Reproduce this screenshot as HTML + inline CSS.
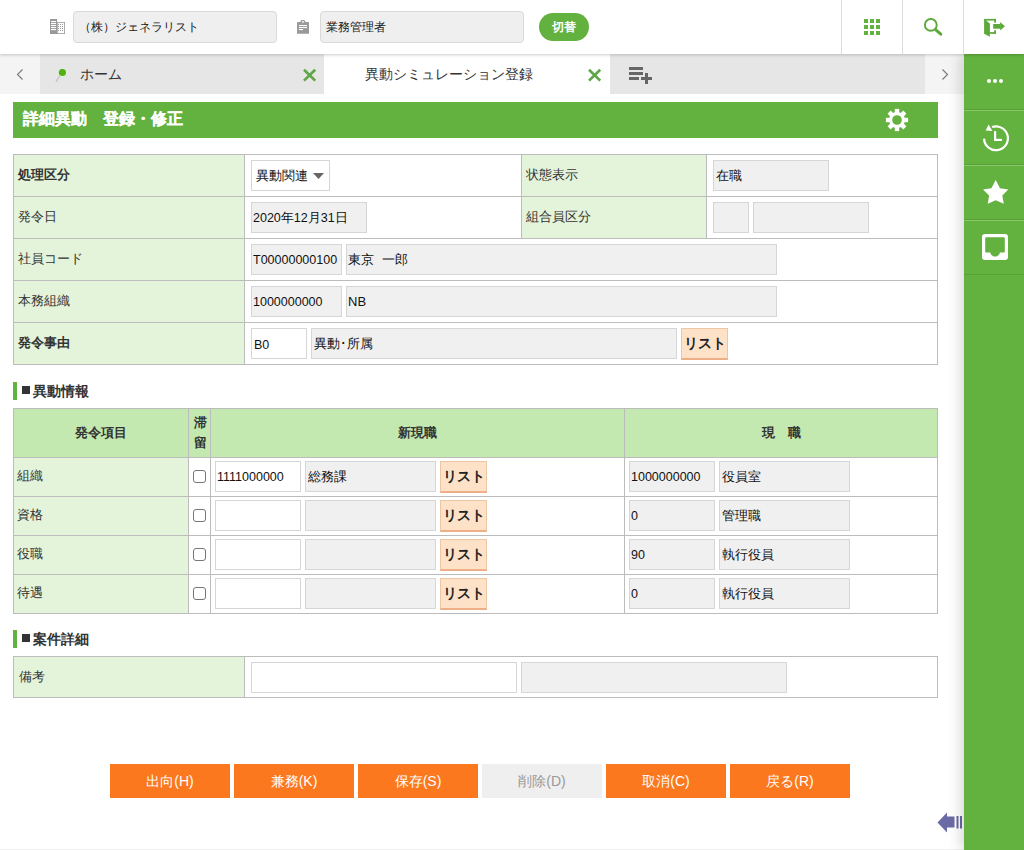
<!DOCTYPE html>
<html lang="ja">
<head>
<meta charset="utf-8">
<style>
*{box-sizing:border-box;margin:0;padding:0}
html,body{width:1024px;height:850px;overflow:hidden;background:#fff;font-family:"Liberation Sans",sans-serif;color:#333;font-size:13px}
.abs{position:absolute}
#hdr{position:absolute;left:0;top:0;width:1024px;height:54px;background:#fff;box-shadow:0 1px 3px rgba(0,0,0,.2);z-index:6}
.hbox{position:absolute;top:11px;height:32px;border:1px solid #d9d9d9;border-radius:4px;background:#efefef;font-size:12px;line-height:30px;padding-left:5px;color:#222}
.vdiv{position:absolute;top:0;width:1px;height:54px;background:#dcdcdc}
#tabs{position:absolute;left:0;top:54px;width:964px;height:40px;background:#e6e6e6}
.tab{position:absolute;top:0;height:40px;line-height:40px;font-size:14px;color:#333}
#side{position:absolute;left:964px;top:54px;width:60px;height:796px;background:#63b13f;box-shadow:-4px 0 12px rgba(0,0,0,.15);z-index:4}
.sdiv{position:absolute;left:0;width:60px;height:2px;border-top:1px solid #58a036;background:#86c868}
#title{position:absolute;left:13px;top:102px;width:925px;height:36px;background:#63b13f;color:#fff;font-weight:bold;font-size:16px;line-height:33px;padding-left:10px;-webkit-text-stroke:0.2px #fff}
.hl{position:absolute;background:#bcbcbc;height:1px}
.vl{position:absolute;background:#bcbcbc;width:1px}
.lab{position:absolute;background:#e3f4da}
.txt{position:absolute;white-space:nowrap;font-size:13px;color:#333}
.inp{position:absolute;border:1px solid #d6d6d6;background:#f0f0f0;font-size:13px;color:#111;padding-left:2px;white-space:nowrap;overflow:hidden}
.inw{background:#fff}
.lst{position:absolute;background:#fde2c8;border:1px solid #efc6a4;border-bottom:2px solid #eeae86;font-weight:bold;font-size:14px;color:#222;text-align:center}
.sec{position:absolute;left:13px;height:18px;border-left:4px solid #63b13f;font-weight:bold;font-size:14px;line-height:18px;padding-left:16px;color:#333}
.sec:before{content:"";position:absolute;left:5px;top:4px;width:8px;height:8px;background:#333}
.btn{position:absolute;top:764px;width:120px;height:34px;background:#fb781e;color:#fff;font-size:14px;line-height:34px;text-align:center}
.chk{position:absolute;width:13px;height:13px;border:1px solid #767676;border-radius:3px;background:#fff}
</style>
</head>
<body>
<!-- header -->
<div id="hdr">
  <!-- building icon -->
  <svg class="abs" style="left:50px;top:19px" width="15" height="15" viewBox="0 0 15 15">
    <rect x="0" y="0" width="7" height="15" fill="#999"/>
    <g fill="#fff"><rect x="1" y="2" width="5" height="1.1"/><rect x="1" y="4" width="5" height="1.1"/><rect x="1" y="6" width="5" height="1.1"/><rect x="1" y="8" width="5" height="1.1"/><rect x="1" y="10" width="5" height="1.1"/></g>
    <rect x="7" y="3" width="8" height="12" fill="#999"/>
    <rect x="7.7" y="3.8" width="6.5" height="10.4" fill="#fff"/>
    <g fill="#999"><rect x="8" y="5" width="1" height="1"/><rect x="10" y="5" width="1" height="1"/><rect x="12" y="5" width="1" height="1"/><rect x="8" y="7" width="1" height="1"/><rect x="10" y="7" width="1" height="1"/><rect x="12" y="7" width="1" height="1"/><rect x="8" y="9" width="1" height="1"/><rect x="10" y="9" width="1" height="1"/><rect x="12" y="9" width="1" height="1"/><rect x="8" y="11" width="1" height="1"/><rect x="10" y="11" width="1" height="1"/><rect x="12" y="11" width="1" height="1"/></g>
  </svg>
  <div class="hbox" style="left:73px;width:204px">（株）ジェネラリスト</div>
  <!-- clipboard icon -->
  <svg class="abs" style="left:297px;top:20px" width="12" height="14" viewBox="0 0 12 14">
    <rect x="0" y="1.9" width="12" height="11.9" rx="0.6" fill="#999"/>
    <rect x="3.4" y="0" width="4.9" height="3.4" rx="1.6" fill="#999"/>
    <rect x="5" y="1.2" width="1.8" height="1.4" fill="#fff"/>
    <g fill="#fff"><rect x="1.9" y="5" width="8.1" height="1.1"/><rect x="1.9" y="7" width="8.1" height="1.1"/><rect x="1.9" y="9" width="4.1" height="1.1"/></g>
  </svg>
  <div class="hbox" style="left:320px;width:204px;padding-left:5px">業務管理者</div>
  <div class="abs" style="left:539px;top:13px;width:50px;height:28px;border-radius:14px;background:#63b13f;color:#fff;font-size:12px;line-height:28px;text-align:center;font-weight:bold">切替</div>
  <div class="vdiv" style="left:841px"></div>
  <div class="vdiv" style="left:902px"></div>
  <div class="vdiv" style="left:963px"></div>
  <!-- grid icon -->
  <svg class="abs" style="left:864px;top:19px" width="16" height="16" viewBox="0 0 16 16" fill="#63b13f">
    <rect x="0" y="0" width="4" height="4"/><rect x="6" y="0" width="4" height="4"/><rect x="12" y="0" width="4" height="4"/>
    <rect x="0" y="6" width="4" height="4"/><rect x="6" y="6" width="4" height="4"/><rect x="12" y="6" width="4" height="4"/>
    <rect x="0" y="12" width="4" height="4"/><rect x="6" y="12" width="4" height="4"/><rect x="12" y="12" width="4" height="4"/>
  </svg>
  <!-- search icon -->
  <svg class="abs" style="left:923px;top:18px" width="20" height="19" viewBox="0 0 20 19">
    <circle cx="7.8" cy="6.9" r="5.9" fill="none" stroke="#5aa93a" stroke-width="1.9"/>
    <path d="M12.8 11.8L17.8 16.2" stroke="#5aa93a" stroke-width="3" stroke-linecap="round"/>
  </svg>
  <!-- exit icon -->
  <svg class="abs" style="left:983px;top:18px" width="23" height="20" viewBox="0 0 23 20" fill="#5aa93a">
    <rect x="1.1" y="0.9" width="11.9" height="1.7"/>
    <rect x="11.2" y="0.9" width="1.8" height="3.8"/>
    <rect x="11.2" y="12.2" width="1.8" height="3.6"/>
    <rect x="6" y="14.1" width="7" height="1.7"/>
    <path d="M1.1 0.9L6.9 5.6V18.7L1.1 15.8Z"/>
    <rect x="10.2" y="6" width="7.4" height="4.7"/>
    <path d="M17.2 3.9L21.9 8.35L17.2 12.6Z"/>
  </svg>
</div>

<!-- tabs -->
<div id="tabs">
  <div class="abs" style="left:0;top:0;width:40px;height:40px;background:#f4f4f4"></div>
  <svg class="abs" style="left:16px;top:15px" width="8" height="11" viewBox="0 0 8 11"><path d="M6.5 0.5L1.5 5.5L6.5 10.5" fill="none" stroke="#777" stroke-width="1.1"/></svg>
  <!-- pin -->
  <svg class="abs" style="left:55px;top:15px" width="13" height="14" viewBox="0 0 13 14">
    <path d="M4.3 7.6L1.3 12.2" stroke="#c4c4c4" stroke-width="1.4" stroke-linecap="round"/>
    <circle cx="7.4" cy="3.5" r="4.2" fill="#dcf5cf"/>
    <circle cx="7.4" cy="3.5" r="3.6" fill="#55b015"/>
  </svg>
  <div class="tab" style="left:80px">ホーム</div>
  <svg class="abs" style="left:302px;top:14px" width="15" height="14" viewBox="0 0 15 14"><path d="M2 1.8L13.2 12.6M13.2 1.8L2 12.6" stroke="#5ea647" stroke-width="2.7"/></svg>
  <div class="abs" style="left:324px;top:0;width:286px;height:40px;background:#fff"></div>
  <div class="tab" style="left:365px">異動シミュレーション登録</div>
  <svg class="abs" style="left:587px;top:14px" width="15" height="14" viewBox="0 0 15 14"><path d="M2 1.8L13.2 12.6M13.2 1.8L2 12.6" stroke="#5ea647" stroke-width="2.7"/></svg>
  <!-- playlist add -->
  <svg class="abs" style="left:629px;top:13px" width="24" height="17" viewBox="0 0 24 17" fill="#666">
    <rect x="0" y="0" width="14" height="3"/><rect x="0" y="5" width="14" height="3"/><rect x="0" y="10" width="10" height="3"/>
    <rect x="16" y="6" width="3" height="11"/><rect x="12" y="10" width="11" height="3"/>
  </svg>
  <div class="abs" style="left:925px;top:0;width:39px;height:40px;background:#f4f4f4"></div>
  <svg class="abs" style="left:941px;top:15px" width="8" height="11" viewBox="0 0 8 11"><path d="M1.5 0.5L6.5 5.5L1.5 10.5" fill="none" stroke="#777" stroke-width="1.1"/></svg>
</div>

<!-- sidebar -->
<div id="side">
  <div class="abs" style="left:23px;top:25px;width:4px;height:4px;border-radius:2px;background:#fff"></div>
  <div class="abs" style="left:29px;top:25px;width:4px;height:4px;border-radius:2px;background:#fff"></div>
  <div class="abs" style="left:35px;top:25px;width:4px;height:4px;border-radius:2px;background:#fff"></div>
  <div class="sdiv" style="top:55px"></div>
  <svg class="abs" style="left:17px;top:69px" width="28" height="30" viewBox="0 0 28 30">
    <path d="M3.1 15.6A11.9 11.9 0 1 0 11.1 4.05" fill="none" stroke="#fff" stroke-width="2.2"/>
    <path d="M7.6 1.4L4.6 7.6L11.4 8Z" fill="#fff"/>
    <rect x="13" y="8.1" width="2.2" height="9.9" fill="#fff"/>
    <rect x="13" y="15.8" width="7.9" height="2.2" fill="#fff"/>
  </svg>
  <div class="sdiv" style="top:110px"></div>
  <svg class="abs" style="left:18px;top:125px" width="28" height="26" viewBox="982 179 28 26">
    <path d="M995.7 179.9L1000 188.2L1008.3 189.4L1002.3 195.5L1003.8 203.8L995.7 200.2L987.8 203.8L989.1 195.5L983 189.4L991.4 188.2Z" fill="#fff"/>
  </svg>
  <div class="sdiv" style="top:165px"></div>
  <svg class="abs" style="left:18px;top:180px" width="26" height="26" viewBox="0 0 26 26">
    <path fill="#fff" fill-rule="evenodd" d="M3 0H23A3 3 0 0 1 26 3V23A3 3 0 0 1 23 26H3A3 3 0 0 1 0 23V3A3 3 0 0 1 3 0ZM4.5 3.3A1.2 1.2 0 0 0 3.2 4.5V17.4A1.2 1.2 0 0 0 4.4 18.6H8.3C8.6 20.8 10.6 22.6 13.1 22.6S17.6 20.8 17.9 18.6H21.6A1.2 1.2 0 0 0 22.8 17.4V4.5A1.2 1.2 0 0 0 21.6 3.3Z"/>
  </svg>
  <div class="abs" style="left:0;top:220px;width:60px;height:1px;background:#58a036"></div>
</div>

<!-- title -->
<div id="title">詳細異動　登録・修正</div>
<svg class="abs" style="left:885px;top:108px" width="24" height="24" viewBox="-12 -12 24 24">
  <g fill="#fff">
    <rect x="-2.2" y="-11.1" width="4.4" height="22.2"/>
    <rect x="-2.2" y="-11.1" width="4.4" height="22.2" transform="rotate(45)"/>
    <rect x="-2.2" y="-11.1" width="4.4" height="22.2" transform="rotate(90)"/>
    <rect x="-2.2" y="-11.1" width="4.4" height="22.2" transform="rotate(135)"/>
    <circle r="8"/>
  </g>
  <circle r="4.8" fill="#63b13f"/>
</svg>

<!-- TABLE 1 -->
<div class="lab" style="left:13px;top:154px;width:231px;height:210px"></div>
<div class="lab" style="left:521px;top:154px;width:185px;height:84px"></div>
<div class="hl" style="left:13px;top:154px;width:925px"></div>
<div class="hl" style="left:13px;top:196px;width:925px"></div>
<div class="hl" style="left:13px;top:238px;width:925px"></div>
<div class="hl" style="left:13px;top:280px;width:925px"></div>
<div class="hl" style="left:13px;top:322px;width:925px"></div>
<div class="hl" style="left:13px;top:364px;width:925px"></div>
<div class="vl" style="left:13px;top:154px;height:211px"></div>
<div class="vl" style="left:244px;top:154px;height:211px"></div>
<div class="vl" style="left:521px;top:154px;height:84px"></div>
<div class="vl" style="left:706px;top:154px;height:84px"></div>
<div class="vl" style="left:937px;top:154px;height:211px"></div>

<div class="txt" style="left:18px;top:166px;font-weight:bold">処理区分</div>
<div class="txt" style="left:18px;top:208px">発令日</div>
<div class="txt" style="left:18px;top:250px">社員コード</div>
<div class="txt" style="left:18px;top:292px">本務組織</div>
<div class="txt" style="left:18px;top:334px;font-weight:bold">発令事由</div>
<div class="txt" style="left:526px;top:166px">状態表示</div>
<div class="txt" style="left:526px;top:208px">組合員区分</div>

<div class="inp inw" style="left:251px;top:160px;width:79px;height:31px;line-height:29px;padding-left:4px">異動関連</div>
<svg class="abs" style="left:313px;top:173px" width="11" height="6" viewBox="0 0 11 6"><path d="M0 0H11L5.5 6Z" fill="#666"/></svg>
<div class="inp" style="left:251px;top:202px;width:116px;height:31px;line-height:31px;font-size:12.5px;padding-left:1px">2020年12月31日</div>
<div class="inp" style="left:713px;top:160px;width:116px;height:31px;line-height:29px">在職</div>
<div class="inp" style="left:713px;top:202px;width:36px;height:31px"></div>
<div class="inp" style="left:753px;top:202px;width:116px;height:31px"></div>
<div class="inp" style="left:251px;top:244px;width:91px;height:31px;line-height:31px;font-size:12.5px;padding-left:1px">T00000000100</div>
<div class="inp" style="left:346px;top:244px;width:431px;height:31px;line-height:29px;padding-left:1px">東京<span style="display:inline-block;width:8px"></span>一郎</div>
<div class="inp" style="left:251px;top:286px;width:91px;height:31px;line-height:31px;font-size:12.5px;padding-left:1px">1000000000</div>
<div class="inp" style="left:346px;top:286px;width:431px;height:31px;line-height:29px;padding-left:1px">NB</div>
<div class="inp inw" style="left:251px;top:328px;width:56px;height:31px;line-height:33px;font-size:12.5px">B0</div>
<div class="inp" style="left:311px;top:328px;width:366px;height:31px;line-height:29px">異動･所属</div>
<div class="lst" style="left:681px;top:328px;width:47px;height:32px;line-height:29px">リスト</div>

<!-- section 1 -->
<div class="sec" style="top:382px">異動情報</div>

<!-- TABLE 2 -->
<div class="abs" style="left:13px;top:408px;width:925px;height:49px;background:#c3e9b0"></div>
<div class="lab" style="left:13px;top:457px;width:175px;height:156px"></div>
<div class="hl" style="left:13px;top:408px;width:925px"></div>
<div class="hl" style="left:13px;top:457px;width:925px"></div>
<div class="hl" style="left:13px;top:496px;width:925px"></div>
<div class="hl" style="left:13px;top:535px;width:925px"></div>
<div class="hl" style="left:13px;top:574px;width:925px"></div>
<div class="hl" style="left:13px;top:613px;width:925px"></div>
<div class="vl" style="left:13px;top:408px;height:206px"></div>
<div class="vl" style="left:188px;top:408px;height:206px"></div>
<div class="vl" style="left:210px;top:408px;height:206px"></div>
<div class="vl" style="left:624px;top:408px;height:206px"></div>
<div class="vl" style="left:937px;top:408px;height:206px"></div>

<div class="txt" style="left:75px;top:424px;font-weight:bold">発令項目</div>
<div class="txt" style="left:194px;top:413px;font-weight:bold;line-height:20px">滞<br>留</div>
<div class="txt" style="left:398px;top:424px;font-weight:bold">新現職</div>
<div class="txt" style="left:762px;top:424px;font-weight:bold">現　職</div>

<div class="txt" style="left:17px;top:467px">組織</div>
<div class="txt" style="left:17px;top:506px">資格</div>
<div class="txt" style="left:17px;top:545px">役職</div>
<div class="txt" style="left:17px;top:584px">待遇</div>

<div class="chk" style="left:193px;top:470px"></div>
<div class="chk" style="left:193px;top:509px"></div>
<div class="chk" style="left:193px;top:548px"></div>
<div class="chk" style="left:193px;top:587px"></div>

<div class="inp inw" style="left:215px;top:461px;width:86px;height:31px;line-height:31px;font-size:12.5px;padding-left:1px">1111000000</div>
<div class="inp" style="left:305px;top:461px;width:131px;height:31px;line-height:29px">総務課</div>
<div class="lst" style="left:440px;top:461px;width:47px;height:32px;line-height:29px">リスト</div>
<div class="inp inw" style="left:215px;top:500px;width:86px;height:31px"></div>
<div class="inp" style="left:305px;top:500px;width:131px;height:31px"></div>
<div class="lst" style="left:440px;top:500px;width:47px;height:32px;line-height:29px">リスト</div>
<div class="inp inw" style="left:215px;top:539px;width:86px;height:31px"></div>
<div class="inp" style="left:305px;top:539px;width:131px;height:31px"></div>
<div class="lst" style="left:440px;top:539px;width:47px;height:32px;line-height:29px">リスト</div>
<div class="inp inw" style="left:215px;top:578px;width:86px;height:31px"></div>
<div class="inp" style="left:305px;top:578px;width:131px;height:31px"></div>
<div class="lst" style="left:440px;top:578px;width:47px;height:32px;line-height:29px">リスト</div>

<div class="inp" style="left:629px;top:461px;width:86px;height:31px;line-height:31px;font-size:12.5px;padding-left:1px">1000000000</div>
<div class="inp" style="left:719px;top:461px;width:131px;height:31px;line-height:29px">役員室</div>
<div class="inp" style="left:629px;top:500px;width:86px;height:31px;line-height:31px;font-size:12.5px;padding-left:1px">0</div>
<div class="inp" style="left:719px;top:500px;width:131px;height:31px;line-height:29px">管理職</div>
<div class="inp" style="left:629px;top:539px;width:86px;height:31px;line-height:31px;font-size:12.5px;padding-left:1px">90</div>
<div class="inp" style="left:719px;top:539px;width:131px;height:31px;line-height:29px">執行役員</div>
<div class="inp" style="left:629px;top:578px;width:86px;height:31px;line-height:31px;font-size:12.5px;padding-left:1px">0</div>
<div class="inp" style="left:719px;top:578px;width:131px;height:31px;line-height:29px">執行役員</div>

<!-- section 2 -->
<div class="sec" style="top:630px">案件詳細</div>

<!-- TABLE 3 -->
<div class="lab" style="left:13px;top:656px;width:231px;height:42px"></div>
<div class="hl" style="left:13px;top:656px;width:925px"></div>
<div class="hl" style="left:13px;top:697px;width:925px"></div>
<div class="vl" style="left:13px;top:656px;height:42px"></div>
<div class="vl" style="left:244px;top:656px;height:42px"></div>
<div class="vl" style="left:937px;top:656px;height:42px"></div>
<div class="txt" style="left:19px;top:668px">備考</div>
<div class="inp inw" style="left:251px;top:662px;width:266px;height:31px"></div>
<div class="inp" style="left:521px;top:662px;width:266px;height:31px"></div>

<!-- buttons -->
<div class="btn" style="left:110px">出向(H)</div>
<div class="btn" style="left:234px">兼務(K)</div>
<div class="btn" style="left:358px">保存(S)</div>
<div class="btn" style="left:482px;background:#efefef;color:#999">削除(D)</div>
<div class="btn" style="left:606px">取消(C)</div>
<div class="btn" style="left:730px">戻る(R)</div>

<!-- bottom arrow -->
<svg class="abs" style="left:937px;top:812px" width="26" height="21" viewBox="0 0 26 21" fill="#6a6aa6">
  <path d="M0.5 10.5L10 0.5V4.5H17.5V15.5H10V20.5Z"/>
  <rect x="19.5" y="4" width="2" height="12.5"/><rect x="23" y="4" width="2" height="12.5"/>
</svg>
<div class="abs" style="left:0;top:849px;width:964px;height:1px;background:#f0f0f0"></div>
</body>
</html>
